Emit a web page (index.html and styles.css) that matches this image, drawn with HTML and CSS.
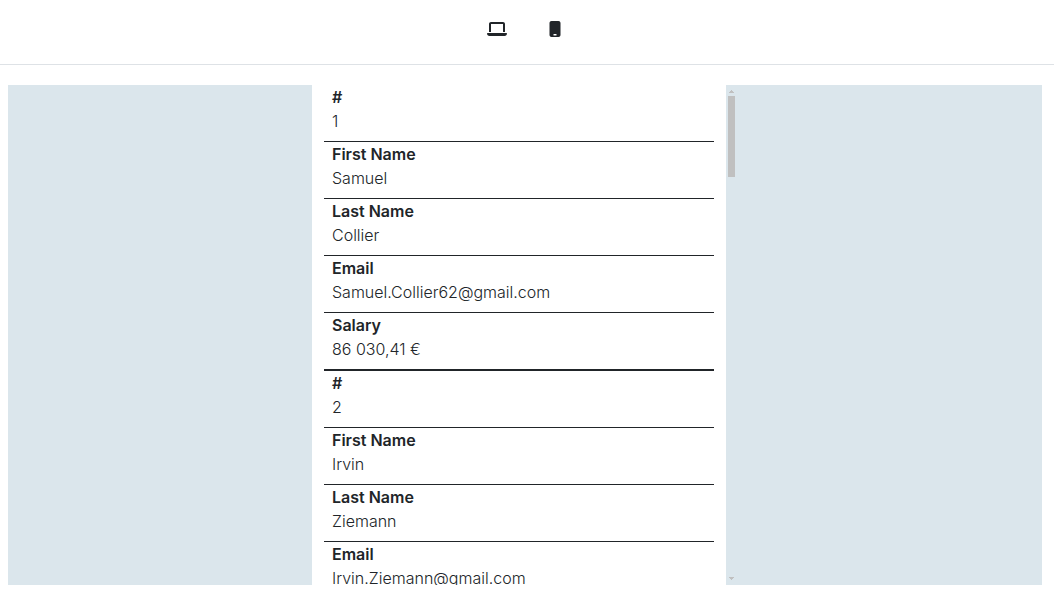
FILE: index.html
```html
<!DOCTYPE html>
<html lang="en">
<head>
<meta charset="utf-8">
<meta name="viewport" content="width=device-width, initial-scale=1">
<title>Responsive table preview</title>
<link rel="stylesheet" href="styles.css">
</head>
<body>
<header class="toolbar">
  <button class="device" type="button" aria-label="Laptop view">
    <svg class="icon" width="20" height="16" viewBox="0 0 640 512" fill="currentColor" aria-hidden="true"><path d="M128 32C92.700 32 64 60.700 64 96V352h64V96H512V352h64V96c0-35.300-28.700-64-64-64H128zM19.200 384C8.600 384 0 392.600 0 403.200C0 445.600 34.400 480 76.800 480H563.200c42.400 0 76.800-34.400 76.800-76.800c0-10.600-8.600-19.200-19.200-19.200H19.200z"/></svg>
  </button>
  <button class="device" type="button" aria-label="Mobile view">
    <svg class="icon" width="12" height="16" viewBox="0 0 384 512" fill="currentColor" aria-hidden="true"><path fill-rule="evenodd" d="M16 64C16 28.700 44.700 0 80 0H304c35.300 0 64 28.700 64 64V448c0 35.300-28.700 64-64 64H80c-35.300 0-64-28.700-64-64V64zM144 432v32h96v-48h-96z"/></svg>
  </button>
</header>
<main class="stage">
  <div class="frame">
    <div class="page">
      <table class="people">
        <tbody>
          <tr>
            <td><b>#</b>1</td>
            <td><b>First Name</b>Samuel</td>
            <td><b>Last Name</b>Collier</td>
            <td><b>Email</b>Samuel.Collier62@gmail.com</td>
            <td><b>Salary</b>86 030,41 €</td>
          </tr>
          <tr>
            <td><b>#</b>2</td>
            <td><b>First Name</b>Irvin</td>
            <td><b>Last Name</b>Ziemann</td>
            <td><b>Email</b>Irvin.Ziemann@gmail.com</td>
          </tr>
        </tbody>
      </table>
    </div>
    <div class="scrollbar" aria-hidden="true">
      <svg width="5" height="3" viewBox="0 0 5 3" fill="currentColor" shape-rendering="crispEdges"><path d="M2 0h1v1h1v1h1v1H0V2h1V1h1z"/></svg>
      <div class="thumb"></div>
      <svg width="5" height="3" viewBox="0 0 5 3" fill="currentColor" shape-rendering="crispEdges"><path d="M0 0h5v1H4v1H3v1H2V2H1V1H0z"/></svg>
    </div>
  </div>
</main>
</body>
</html>
```
FILE: styles.css
```css
* {
  box-sizing: border-box;
}

body {
  margin: 0;
  background: #fff;
  color: #212529;
  font: 300 16px/24px Inter, "Liberation Sans", sans-serif;
}

.toolbar {
  display: flex;
  justify-content: center;
  gap: 16px;
  padding: 12px 6px 18px 0;
  border-bottom: 1px solid #dee2e6;
}

.device {
  display: flex;
  align-items: center;
  padding: 9px 13px;
  border: 0;
  background: none;
  color: inherit;
  cursor: pointer;
}

.icon {
  display: block;
}

.stage {
  display: flex;
  justify-content: center;
  margin: 20px 12px 0 8px;
  background: #dbe6ec;
}

.frame {
  display: flex;
  width: 426px;
  max-width: 100%;
  height: calc(100vh - 95px);
}

.page {
  flex: 1;
  padding: 0 12px;
  overflow: hidden;
  background: #fff;
}

.people,
.people tbody,
.people tr,
.people td {
  display: block;
}

.people tr {
  border-bottom: 1px solid #212529;
}

.people td {
  padding: 0 8px 8px;
  border-bottom: 1px solid #212529;
}

.people b {
  display: block;
  font-weight: 600;
}

.scrollbar {
  display: flex;
  flex-direction: column;
  align-items: center;
  width: 12px;
  padding: 5px 1px 5px 0;
  color: #c0c0c0;
}

.thumb {
  width: 7px;
  height: 81px;
  margin: 3px 0 auto;
  background: #c0c0c0;
}
```
